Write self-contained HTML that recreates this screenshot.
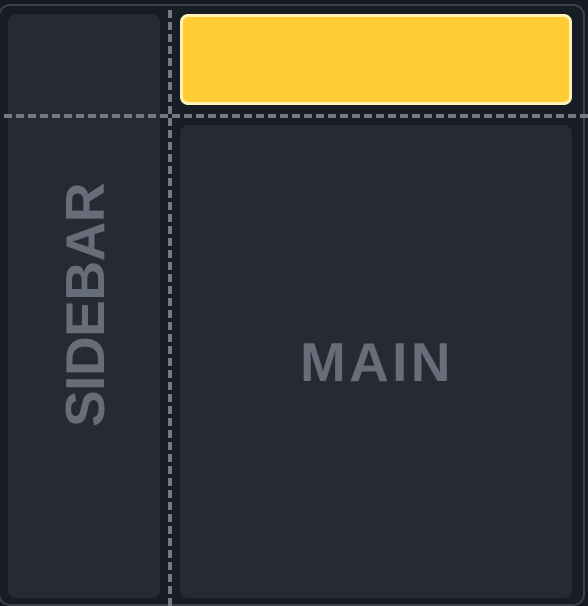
<!DOCTYPE html>
<html><head><style>
html,body{margin:0;padding:0;width:588px;height:606px;background:#161b22;overflow:hidden}
.frame{position:absolute;left:-2px;top:4px;width:583px;height:598px;border:2px solid #3b414b;border-radius:12px;background:#181d25}
.p{position:absolute;background:#262b33;border-radius:8px}
.t{font-family:"Liberation Sans",sans-serif;font-weight:bold;font-size:55px;color:#676d79;position:absolute;white-space:nowrap}
.v{position:absolute;left:168px;top:10px;width:4px;height:596px;background:repeating-linear-gradient(to bottom,#737a86 0 8px,transparent 8px 12px)}
.h{position:absolute;left:4px;top:114px;width:584px;height:4px;background:repeating-linear-gradient(to right,#737a86 0 8px,transparent 8px 12px)}
</style></head><body>
<div class="frame"></div>
<div class="p" style="left:8px;top:14px;width:152px;height:584px"></div>
<div class="p" style="left:180px;top:125px;width:392px;height:473px"></div>
<div style="position:absolute;left:180px;top:14px;width:386px;height:85px;background:#ffcc33;border:3px solid #fff2b5;border-radius:8px"></div>
<div class="v"></div><div class="h"></div>
<div class="t" style="left:300px;top:330px;letter-spacing:3.3px">MAIN</div>
<div class="t" style="left:85px;top:305px;letter-spacing:-0.5px;transform:translate(-50%,-50%) rotate(-90deg);transform-origin:center">SIDEBAR</div>
</body></html>
